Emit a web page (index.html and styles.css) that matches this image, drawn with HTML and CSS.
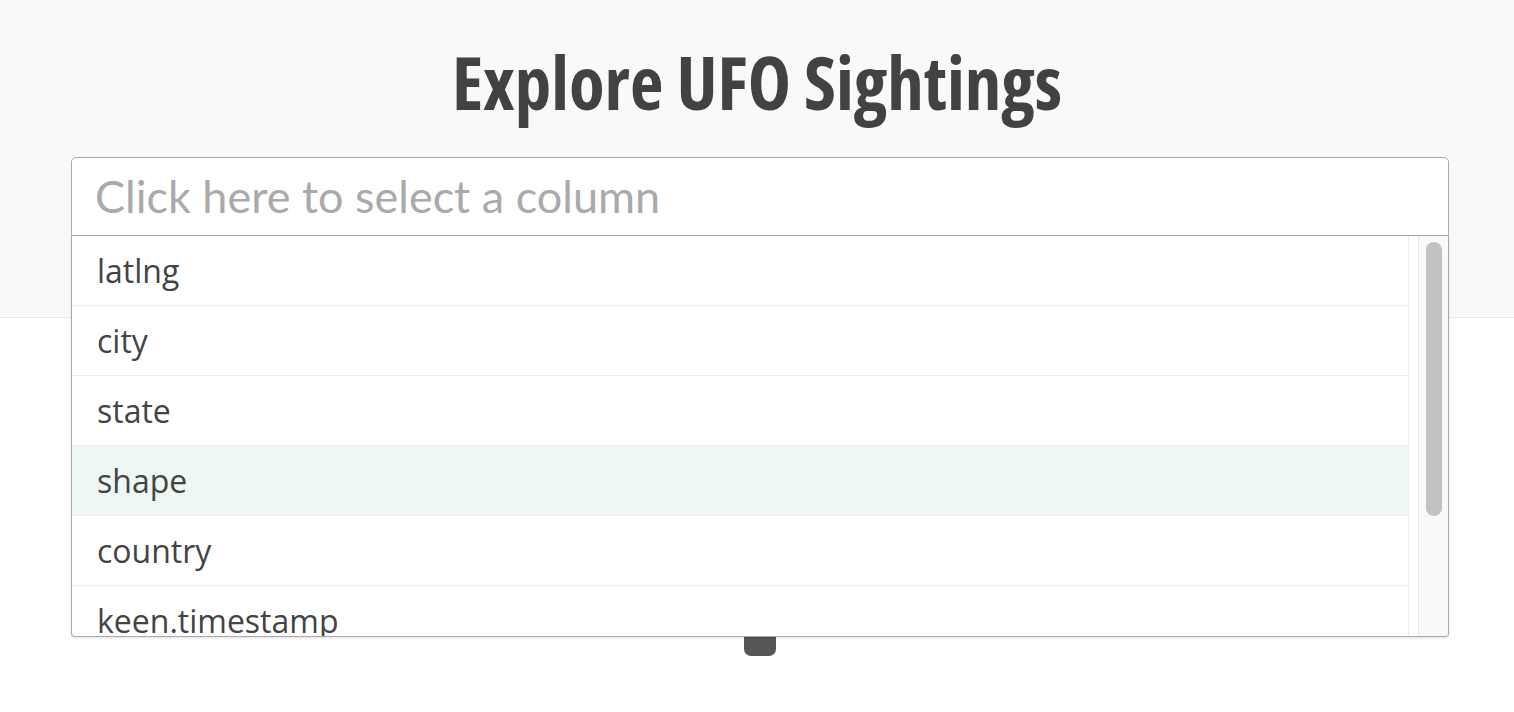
FILE: index.html
```html
<!DOCTYPE html>
<html lang="en">
<head>
<meta charset="utf-8">
<title>Explore UFO Sightings</title>
<link rel="stylesheet" href="styles.css">
</head>
<body>
<header class="hero">
  <h1 class="title">Explore UFO Sightings</h1>
  <div class="picker">
    <div class="picker-input">Click here to select a column</div>
    <div class="picker-menu">
      <ul class="options">
        <li class="option">latlng</li>
        <li class="option">city</li>
        <li class="option">state</li>
        <li class="option option-active">shape</li>
        <li class="option">country</li>
        <li class="option">keen.timestamp</li>
      </ul>
      <div class="scroll-track"><div class="scroll-thumb"></div></div>
    </div>
  </div>
</header>
<main class="content">
  <div class="handle"></div>
</main>
</body>
</html>
```

FILE: styles.css
```css
html, body {
  margin: 0;
  padding: 0;
  background: #ffffff;
}
body {
  font-family: "Open Sans", "DejaVu Sans", sans-serif;
  color: #444444;
}
.hero {
  background: #f9f9f7;
  border-bottom: 1px solid #e6e6e4;
  height: 318px;
  box-sizing: border-box;
  padding-top: 37px;
}
.title {
  margin: 0;
  text-align: center;
  font-family: "Open Sans", sans-serif;
  font-stretch: 75%;
  font-weight: 700;
  font-size: 73px;
  line-height: 90px;
  color: #424242;
}
.picker {
  position: relative;
  margin: 30px 65px 0 71px;
  z-index: 2;
}
.picker-input {
  height: 77px;
  border: 1px solid #aaaaaa;
  border-radius: 5px 5px 0 0;
  background: #ffffff;
  font-family: "Lato", sans-serif;
  font-size: 45px;
  line-height: 77px;
  color: #aaaaaa;
  padding-left: 23px;
}
.picker-menu {
  position: absolute;
  top: 100%;
  left: 0;
  right: 0;
  height: 400px;
  background: #ffffff;
  border: 1px solid #aaaaaa;
  border-top: none;
  border-radius: 0 0 4px 4px;
  box-shadow: 0 1px 3px rgba(0,0,0,0.12);
  display: flex;
  overflow: hidden;
}
.options {
  list-style: none;
  margin: 0;
  padding: 0;
  flex: 1;
  border-right: 1px solid #ececec;
}
.option {
  height: 69px;
  border-bottom: 1px solid #ececec;
  padding-left: 25px;
  font-size: 32px;
  line-height: 69px;
  color: #444444;
  white-space: nowrap;
}
.option-active {
  background: #eef7f2;
}
.scroll-track {
  width: 29px;
  margin-left: 9px;
  background: #f9f9f9;
  border-left: 1px solid #e6e6e6;
  position: relative;
}
.scroll-thumb {
  position: absolute;
  left: 7px;
  top: 6px;
  width: 16px;
  height: 274px;
  border-radius: 8px;
  background: #c2c2c2;
}
.content {
  position: relative;
  height: 394px;
}
.handle {
  position: absolute;
  left: 744px;
  top: 317px;
  width: 32px;
  height: 21px;
  background: #555555;
  border-radius: 0 0 7px 7px;
}
```
